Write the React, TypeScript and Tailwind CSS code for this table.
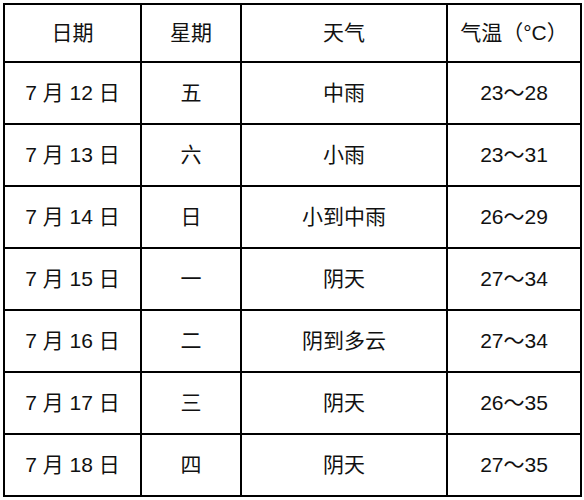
const rows = [
  ["7 月 12 日", "五", "中雨", "23～28"],
  ["7 月 13 日", "六", "小雨", "23～31"],
  ["7 月 14 日", "日", "小到中雨", "26～29"],
  ["7 月 15 日", "一", "阴天", "27～34"],
  ["7 月 16 日", "二", "阴到多云", "27～34"],
  ["7 月 17 日", "三", "阴天", "26～35"],
  ["7 月 18 日", "四", "阴天", "27～35"],
]

const headers = ["日期", "星期", "天气", "气温（°C）"]

export default function App() {
  return (
    <div className="h-[500px] w-[584px] bg-white pl-[3px] pt-[3px] font-['Liberation_Sans','Noto_Sans_CJK_SC',sans-serif] text-[21px] text-[#111]">
      <table className="table-fixed border-collapse">
        <colgroup>
          <col className="w-[137px]" />
          <col className="w-[100px]" />
          <col className="w-[206px]" />
          <col className="w-[134px]" />
        </colgroup>
        <thead>
          <tr className="h-[58px]">
            {headers.map((h) => (
              <th
                key={h}
                className="border-2 border-black text-center font-normal"
              >
                {h}
              </th>
            ))}
          </tr>
        </thead>
        <tbody>
          {rows.map((row) => (
            <tr key={row[0]} className="h-[62px]">
              {row.map((cell, i) => (
                <td
                  key={i}
                  className="border-2 border-black text-center"
                >
                  {cell}
                </td>
              ))}
            </tr>
          ))}
        </tbody>
      </table>
    </div>
  )
}
